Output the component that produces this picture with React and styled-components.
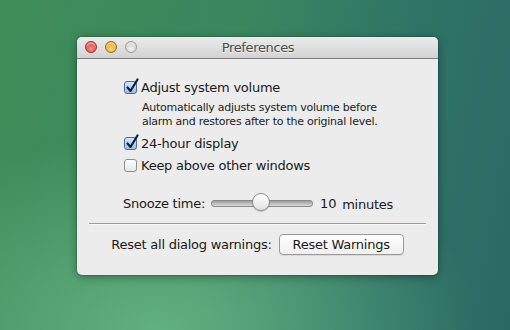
import React from 'react';
import styled, { createGlobalStyle } from 'styled-components';

const GlobalStyle = createGlobalStyle`
  html, body {
    margin: 0;
    padding: 0;
  }
  body {
    font-family: "DejaVu Sans", "Liberation Sans", sans-serif;
    letter-spacing: -0.25px;
  }
`;

const Desktop = styled.div`
  width: 510px;
  height: 330px;
  box-sizing: border-box;
  padding: 37px 0 0 77px;
  overflow: hidden;
  background:
    radial-gradient(ellipse 320px 200px at 160px 330px, rgba(110, 190, 140, 0.75), rgba(110, 190, 140, 0) 100%),
    linear-gradient(100deg, #3f8d58 0%, #3b8660 45%, #2f7367 75%, #2a6a63 100%);
`;

const Window = styled.div`
  width: 361px;
  height: 238px;
  border-radius: 5px;
  background: #ececec;
  box-shadow: 0 2px 10px rgba(0, 0, 0, 0.35), 0 0 0 1px rgba(0, 0, 0, 0.12);
  display: flex;
  flex-direction: column;
  overflow: hidden;
`;

const TitleBar = styled.div`
  height: 21px;
  flex-shrink: 0;
  position: relative;
  display: flex;
  align-items: center;
  justify-content: center;
  background: linear-gradient(#ebebeb, #d3d3d3);
  border-bottom: 1px solid #7b7b7b;
`;

const Lights = styled.div`
  position: absolute;
  left: 8px;
  top: 4px;
  display: flex;
  gap: 8px;
`;

const Light = styled.span`
  width: 12px;
  height: 12px;
  border-radius: 50%;
  box-sizing: border-box;
  border: 1px solid ${p => p.$edge};
  background: radial-gradient(circle at 50% 70%, ${p => p.$glow} 0%, ${p => p.$base} 60%, ${p => p.$dark} 100%);
  box-shadow: inset 0 2px 2px rgba(255, 255, 255, 0.6);
`;

const Title = styled.div`
  font-size: 13px;
  letter-spacing: -0.35px;
  color: #4c4c4c;
  text-shadow: 0 1px 0 rgba(255, 255, 255, 0.6);
  margin-left: 1px;
`;

const Body = styled.div`
  flex: 1;
  display: flex;
  flex-direction: column;
  padding: 20px 12px 0 12px;
`;

const Options = styled.div`
  padding-left: 35px;
  display: flex;
  flex-direction: column;
`;

const CheckRow = styled.label`
  display: flex;
  align-items: center;
  gap: 4px;
  height: 17px;
  margin-top: ${p => p.$gap || 0}px;
  font-size: 13px;
  color: #1a1a1a;
`;

const Box = styled.span`
  position: relative;
  width: 13px;
  height: 13px;
  box-sizing: border-box;
  border-radius: 3px;
  border: 1px solid #8f8f8f;
  background: linear-gradient(#ffffff, #e6e6e6);
  ${p => p.$on && `
    border-color: #4b6d9c;
    background: linear-gradient(#d8e6f6, #9dbde3);
  `}
`;

const Tick = styled.svg`
  position: absolute;
  left: 0;
  top: -4px;
`;

const Description = styled.div`
  font-size: 11px;
  line-height: 14px;
  color: #222;
  padding-left: 18px;
  margin-top: 5px;
`;

const SnoozeRow = styled.div`
  display: flex;
  align-items: center;
  margin-top: 19px;
  padding-left: 34px;
  font-size: 13px;
  color: #1a1a1a;
  height: 20px;
`;

const Track = styled.div`
  position: relative;
  width: 100px;
  height: 5px;
  margin-left: 6px;
  border-radius: 3px;
  border: 1px solid #8a8a8a;
  background: linear-gradient(#9b9b9b, #dcdcdc);
`;

const Thumb = styled.span`
  position: absolute;
  top: -8px;
  width: 18px;
  height: 18px;
  box-sizing: border-box;
  border-radius: 50%;
  border: 1px solid #8e8e8e;
  background: linear-gradient(#ffffff, #e2e2e2);
  box-shadow: 0 1px 1px rgba(0, 0, 0, 0.2);
`;

const Value = styled.span`
  margin-left: 7px;
`;

const Unit = styled.span`
  margin-left: 6px;
  margin-top: 3px;
`;

const Divider = styled.div`
  height: 1px;
  background: #9c9c9c;
  margin-top: 10px;
  border-bottom: 1px solid #f7f7f7;
`;

const ResetRow = styled.div`
  display: flex;
  align-items: center;
  justify-content: center;
  gap: 7px;
  margin-top: 9px;
  padding-right: 0;
  font-size: 13px;
  color: #1a1a1a;
`;

const Button = styled.button`
  font-family: inherit;
  font-size: 13px;
  letter-spacing: -0.25px;
  color: #1a1a1a;
  width: 125px;
  height: 21px;
  padding: 0;
  border-radius: 4px;
  border: 1px solid #9a9a9a;
  background: linear-gradient(#ffffff, #f0f0f0);
  box-shadow: 0 1px 0 rgba(0, 0, 0, 0.08);
`;

const Check = ({ on, gap, children }) => (
    <CheckRow $gap={gap}>
        <Box $on={on}>
            {on && (
                <Tick width="15" height="16" viewBox="0 0 15 16">
                    <path d="M2.5 9.5 L5.5 13 L12.5 1.5" fill="none" stroke="#10203a" strokeWidth="2.2" strokeLinecap="round" strokeLinejoin="round" />
                </Tick>
            )}
        </Box>
        {children}
    </CheckRow>
);

const App = () => {
    const snooze = 10;
    const pos = (snooze / 25) * 100;
    return (
        <>
            <GlobalStyle />
            <Desktop>
                <Window>
                    <TitleBar>
                        <Lights>
                            <Light $edge="#9a2a2a" $base="#e0443e" $glow="#ff9a8a" $dark="#b52320" />
                            <Light $edge="#9a6a10" $base="#e9a21c" $glow="#ffe08a" $dark="#c27c0c" />
                            <Light $edge="#9a9a9a" $base="#cfcfcf" $glow="#f4f4f4" $dark="#b4b4b4" />
                        </Lights>
                        <Title>Preferences</Title>
                    </TitleBar>
                    <Body>
                        <Options>
                            <Check on>Adjust system volume</Check>
                            <Description>
                                Automatically adjusts system volume before<br />
                                alarm and restores after to the original level.
                            </Description>
                            <Check on gap={6}>24-hour display</Check>
                            <Check gap={5}>Keep above other windows</Check>
                        </Options>
                        <SnoozeRow>
                            Snooze time:
                            <Track>
                                <Thumb style={{ left: pos + 'px' }} />
                            </Track>
                            <Value>{snooze}</Value>
                            <Unit>minutes</Unit>
                        </SnoozeRow>
                        <Divider />
                        <ResetRow>
                            Reset all dialog warnings:
                            <Button>Reset Warnings</Button>
                        </ResetRow>
                    </Body>
                </Window>
            </Desktop>
        </>
    );
};

export default App;
